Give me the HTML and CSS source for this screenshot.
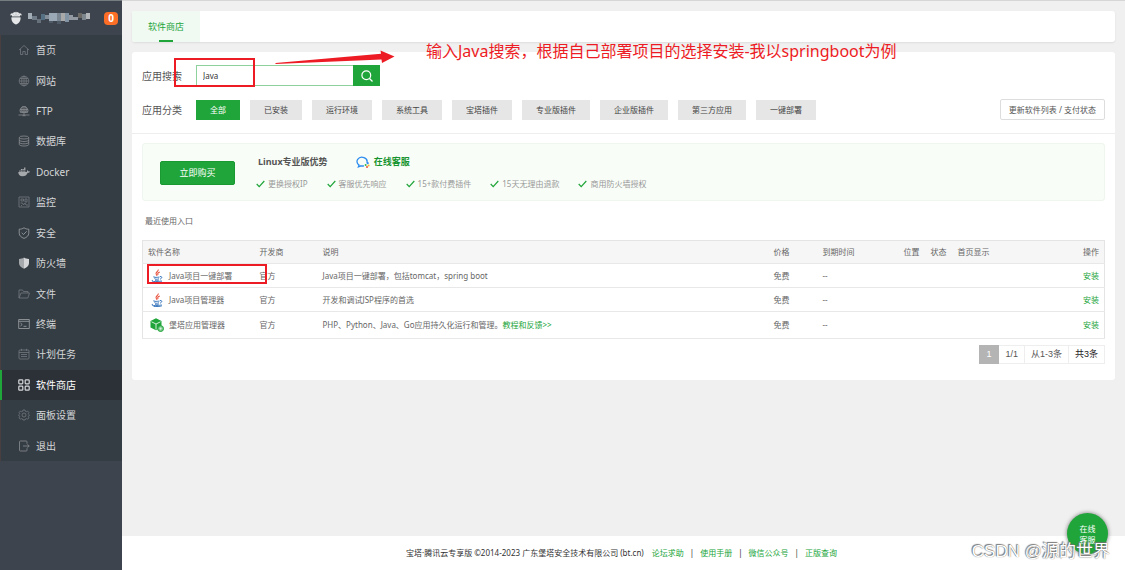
FILE: index.html
```html
<!DOCTYPE html>
<html lang="zh-CN">
<head>
<meta charset="utf-8">
<meta name="viewport" content="width=device-width, initial-scale=1">
<title>软件商店</title>
<link rel="stylesheet" href="styles.css">
</head>
<body>
<div class="app">
  <aside class="sidebar">
    <div class="brand">
      <svg class="brand-logo" viewBox="0 0 14 14" aria-hidden="true"><path fill="#e4e6e8" d="M1 4.400 2 2.600 4 2.200 5 1l1.300.6L7 .6l.7 1L9 1l1 1.200 2 .4 1 1.800-1.500-.4-.7 1.500H3.200L2.500 4zM2.500 6.300h9c.4 3-.9 6.200-4.500 7.200-3.600-1-4.900-4.200-4.500-7.200z"/><path stroke="#8e949a" stroke-width=".5" fill="none" d="M3 5.900h8M4.500 3.400l1 1M9.500 3.400l-1 1M7 2.500v2"/></svg>
      <svg class="brand-name" viewBox="0 0 62 14" aria-hidden="true">
        <path fill="#a3adb6" d="M0 2h4v6H0z"/><path fill="#6f7b86" d="M4 5h5v4H4z"/><path fill="#66717c" d="M9 8h4v4H9z"/><path fill="#557083" d="M13 3h4v6h-4z"/><path fill="#858f99" d="M17 4h4v4h-4z"/><path fill="#9aa9b5" d="M21 2h8v8h-8z"/><path fill="#7a8792" d="M29 2h4v8h-4z"/><path fill="#a9a9aa" d="M33 2h4v8h-4z"/><path fill="#8294a3" d="M37 2h4v9h-4z"/><path fill="#9299a1" d="M41 4h4v5h-4zM45 6h5v3h-5z"/><path fill="#6d6965" d="M50 2h4v5h-4z"/><path fill="#7d858d" d="M54 3h4v6h-4z"/><path fill="#b3b6b8" d="M58 2h4v6h-4z"/><path fill="#4e5b67" d="M29 10h4v3h-4zM21 10h4v2h-4z"/>
      </svg>
      <span class="badge">0</span>
    </div>
    <nav class="menu">
      <a class="menu-item" href="#"><svg class="icon" viewBox="0 0 12 12"><path d="M1 6 6 1.500 11 6M2.500 5v5.500h2.300V7.500h2.400v3h2.300V5"/></svg>首页</a>
      <a class="menu-item" href="#"><svg class="icon" viewBox="0 0 12 12"><circle cx="6" cy="6" r="4.800"/><ellipse cx="6" cy="6" rx="2.300" ry="4.800"/><path d="M1.200 6h9.600M6 1.200v9.600M2 3.500h8M2 8.500h8"/></svg>网站</a>
      <a class="menu-item" href="#"><svg class="icon mid" viewBox="0 0 12 12"><path d="M2.500 7.500a4 4 0 1 1 7 0zM2 4.500h8M2 6.200h8M6 1v7M4.500 1.500c-1 2-1 4 0 6M7.500 1.500c1 2 1 4 0 6M6 8v2M.5 10h11M4.500 10.700h3"/></svg>FTP</a>
      <a class="menu-item" href="#"><svg class="icon mid" viewBox="0 0 12 12"><ellipse cx="6" cy="2.500" rx="4.700" ry="1.500"/><path d="M1.300 2.500v7c0 2 9.400 2 9.400 0v-7M1.300 5c0 2 9.400 2 9.400 0M1.300 7.300c0 2 9.400 2 9.400 0"/></svg>数据库</a>
      <a class="menu-item" href="#"><svg class="icon" viewBox="0 0 12 12"><path class="solid" d="M.3 6h8.300c.7-.4.4-1.400.8-2 .6.400.8.900.8 1.400.7-.1 1.200 0 1.700.3-.4.900-1.300 1.100-2.200 1.100C8.800 9.200 7 10.300 4.600 10.300 1.500 10.300.3 8.500.3 6zM1.300 4.400h1.300v1.300H1.300zM2.900 4.400h1.300v1.300H2.900zM4.500 4.400h1.300v1.300H4.500zM6.100 4.400h1.300v1.300H6.100zM2.900 2.900h1.300v1.200H2.900zM4.500 2.900h1.300v1.200H4.500zM6.100 1.400h1.300v2.700H6.100z"/></svg>Docker</a>
      <a class="menu-item" href="#"><svg class="icon" viewBox="0 0 12 12"><path d="M1 1h10v10H1zM3 3h2.500v2H3zM7 3h2v3H7zM2.500 7h2l1 2 1.500-2 1 2H10M3 9.500h1"/></svg>监控</a>
      <a class="menu-item" href="#"><svg class="icon bright" viewBox="0 0 12 12"><path d="M6 .8c1.500 1 3 1.400 4.800 1.400v4c0 2.600-2.200 4.200-4.800 5.200C3.400 10.400 1.200 8.800 1.200 6.200v-4C3 2.200 4.500 1.800 6 .8zM3.700 5.800l1.800 1.700 3.200-3.200"/></svg>安全</a>
      <a class="menu-item" href="#"><svg class="icon" viewBox="0 0 12 12"><path class="pale" d="M6 .5c1.500 1 3 1.400 5 1.400v4.300c0 2.700-2.300 4.400-5 5.500z"/><path class="solid" d="M6 .5C4.500 1.500 3 1.900 1 1.900v4.300c0 2.700 2.300 4.400 5 5.500z"/></svg>防火墙</a>
      <a class="menu-item" href="#"><svg class="icon" viewBox="0 0 12 12"><path d="M1 10V2h3.500l1 1.500H10V5M1 10l2-5h8.500l-1.700 5z"/></svg>文件</a>
      <a class="menu-item" href="#"><svg class="icon bright" viewBox="0 0 12 12"><path d="M.7 1.500h10.600v9H.7zM.7 3.300h10.600M2.500 5l1.700 1.500L2.500 8M5.500 8.300h3"/></svg>终端</a>
      <a class="menu-item" href="#"><svg class="icon" viewBox="0 0 12 12"><rect x="1" y="2" width="10" height="9" rx="1"/><path d="M1 4.500h10M3.500.8v2M8.500.8v2M3 6.500h6M3 8.500h6"/></svg>计划任务</a>
      <a class="menu-item active" href="#" aria-current="page"><svg class="icon" viewBox="0 0 12 12"><rect x=".8" y=".8" width="4" height="4" rx=".8"/><rect x="7.200" y=".8" width="4" height="4" rx=".8"/><rect x=".8" y="7.200" width="4" height="4" rx=".8"/><rect x="7.200" y="7.200" width="4" height="4" rx=".8"/></svg>软件商店</a>
      <a class="menu-item" href="#"><svg class="icon" viewBox="0 0 12 12"><path d="M5 1h2l.4 1.300 1 .4 1.200-.6 1.300 1.300-.6 1.200.3.700.9.700-.9 1-.3.700.6 1.200-1.300 1.300-1.200-.6-1 .4L7 11H5l-.4-1-1-.4-1.200.6L1.100 8.900l.6-1.200-.3-.7L.5 6l.9-.7.3-.7-.6-1.200L2.400 2.100l1.200.6 1-.4z"/><circle cx="6" cy="6" r="2"/></svg>面板设置</a>
      <a class="menu-item" href="#"><svg class="icon mid" viewBox="0 0 12 12"><path d="M9 3.800V1.800Q9 1 8.200 1H2.300q-.8 0-.8.800v8.400q0 .8.800.8h5.900q.8 0 .8-.8v-2M5 6h6.200M9.500 4.300 11.200 6 9.500 7.700"/></svg>退出</a>
    </nav>
  </aside>

  <div class="page">
    <main class="content">
      <div class="tabs"><a class="tab" href="#">软件商店</a></div>

      <section class="panel">
        <div class="filters">
          <form class="search-row">
            <label class="row-label" for="q">应用搜索</label>
            <input class="search-input" id="q" type="text" value="Java">
            <button class="search-button" type="button" aria-label="搜索"><svg viewBox="0 0 12 12"><circle cx="5.300" cy="5.300" r="4.400"/><path d="m8.500 8.500 3 3"/></svg></button>
          </form>
          <div class="category-row">
            <span class="row-label">应用分类</span>
            <div class="categories">
              <button class="category selected" type="button">全部</button>
              <button class="category" type="button">已安装</button>
              <button class="category" type="button">运行环境</button>
              <button class="category" type="button">系统工具</button>
              <button class="category" type="button">宝塔插件</button>
              <button class="category" type="button">专业版插件</button>
              <button class="category" type="button">企业版插件</button>
              <button class="category" type="button">第三方应用</button>
              <button class="category" type="button">一键部署</button>
            </div>
            <button class="refresh" type="button">更新软件列表 / 支付状态</button>
          </div>
        </div>

        <div class="promo">
          <button class="buy" type="button">立即购买</button>
          <div class="promo-text">
            <div class="promo-head">
              <strong>Linux专业版优势</strong>
              <a class="service" href="#"><svg viewBox="0 0 14 12"><path fill="none" stroke="#2f8df0" stroke-width="1.300" d="M10.800 6.800A5 4.300 0 1 0 3 9l-.6 1.800L5 9.800c1 .3 2 .2 3 0"/><circle cx="11.700" cy="7.200" r="1.100" fill="#2f8df0"/><circle cx="9.600" cy="9" r="1" fill="#35b24a"/><circle cx="12.600" cy="9.500" r="1" fill="#f8b62b"/><circle cx="11" cy="10.900" r="1" fill="#f0503c"/></svg>在线客服</a>
            </div>
            <ul class="benefits">
              <li><svg viewBox="0 0 9 8"><path d="m.7 4 2.500 2.600L8.300 1"/></svg>更换授权IP</li>
              <li><svg viewBox="0 0 9 8"><path d="m.7 4 2.500 2.600L8.300 1"/></svg>客服优先响应</li>
              <li><svg viewBox="0 0 9 8"><path d="m.7 4 2.500 2.600L8.300 1"/></svg>15+款付费插件</li>
              <li><svg viewBox="0 0 9 8"><path d="m.7 4 2.500 2.600L8.300 1"/></svg>15天无理由退款</li>
              <li><svg viewBox="0 0 9 8"><path d="m.7 4 2.500 2.600L8.300 1"/></svg>商用防火墙授权</li>
            </ul>
          </div>
        </div>

        <div class="recent">最近使用入口</div>

        <table class="software">
          <colgroup><col class="c-name"><col class="c-vendor"><col><col class="c-price"><col class="c-expire"><col class="c-small"><col class="c-small"><col class="c-home"><col class="c-action"></colgroup>
          <thead><tr><th>软件名称</th><th>开发商</th><th>说明</th><th>价格</th><th>到期时间</th><th>位置</th><th>状态</th><th>首页显示</th><th class="action">操作</th></tr></thead>
          <tbody>
            <tr><td><span class="name"><svg viewBox="0 0 14 14"><path class="steam" d="M8.200.5C9 2.300 4.800 3.400 6.200 5.200L7.100 6.800M9.800 3C7.500 4 7.200 4.700 8.200 6"/><path class="cup" d="M4.200 7.600c-1.800.5.500 1 3.500.7l1.800-.3M4.500 9.500c0 1 3 1 4.500.3M5 11.200c.5.700 2.500.7 3.700.1M2.800 11.300c-4 1.300 6 2 8.700.4M10 7.600c2.500-.6 2.300 1.800 0 2.600M3.500 13.300c3 .5 6.500.3 8.500-.6"/></svg>Java项目一键部署</span></td><td>官方</td><td>Java项目一键部署，包括tomcat，spring boot</td><td>免费</td><td>--</td><td></td><td></td><td></td><td class="action"><a href="#">安装</a></td></tr>
            <tr><td><span class="name"><svg viewBox="0 0 14 14"><path class="steam" d="M8.200.5C9 2.300 4.800 3.400 6.200 5.200L7.100 6.800M9.800 3C7.500 4 7.200 4.700 8.200 6"/><path class="cup" d="M4.200 7.600c-1.800.5.500 1 3.500.7l1.800-.3M4.500 9.500c0 1 3 1 4.500.3M5 11.200c.5.700 2.500.7 3.700.1M2.800 11.300c-4 1.300 6 2 8.700.4M10 7.600c2.500-.6 2.300 1.800 0 2.600M3.500 13.300c3 .5 6.500.3 8.500-.6"/></svg>Java项目管理器</span></td><td>官方</td><td>开发和调试JSP程序的首选</td><td>免费</td><td>--</td><td></td><td></td><td></td><td class="action"><a href="#">安装</a></td></tr>
            <tr class="tall"><td><span class="name"><svg viewBox="0 0 14 14"><path fill="#20a53a" d="M6 .3 11.500 3v6.500L6 12.200.5 9.500V3z"/><path fill="none" stroke="#fff" stroke-width=".8" d="M1.500 3.800 6 6l4.500-2.200M6 6v5.500"/><circle cx="10.600" cy="10.600" r="2.900" fill="#79c98a" stroke="#20a53a"/><circle cx="10.600" cy="10.600" r="1.100" fill="#d9f1de"/></svg>堡塔应用管理器</span></td><td>官方</td><td>PHP、Python、Java、Go应用持久化运行和管理。<a href="#">教程和反馈&gt;&gt;</a></td><td>免费</td><td>--</td><td></td><td></td><td></td><td class="action"><a href="#">安装</a></td></tr>
          </tbody>
        </table>

        <div class="pager"><span class="current">1</span><span>1/1</span><span>从1-3条</span><span class="total">共3条</span></div>
      </section>
    </main>

    <footer class="footer">
      <span>宝塔·腾讯云专享版 ©2014-2023 广东堡塔安全技术有限公司 (bt.cn)</span>
      <a href="#">论坛求助</a><i>|</i><a href="#">使用手册</a><i>|</i><a href="#">微信公众号</a><i>|</i><a href="#">正版查询</a>
    </footer>
  </div>

  <div class="mark mark-search"></div>
  <div class="mark mark-row"></div>
  <svg class="arrow" viewBox="0 0 122 16" aria-hidden="true"><path fill="#ed1c24" d="M.5 13 106 3.800 105.500.5 119.500 6.500 107 13l-.5-3.500L.5 14z"/></svg>
  <p class="note">输入Java搜索，根据自己部署项目的选择安装-我以springboot为例</p>
  <button class="chat" type="button">在线<br>客服</button>
  <div class="watermark">CSDN @源的世界</div>
</div>
</body>
</html>
```

FILE: styles.css
```css
* { box-sizing: border-box; }

body {
  margin: 0;
  background: #f0f0f0;
  color: #666;
  font: 8px/12px "Noto Sans", "Noto Sans CJK SC", sans-serif;
}

a { color: #20a53a; text-decoration: none; }
button, input { font: inherit; margin: 0; }
svg { display: block; flex: none; }

.app {
  position: relative;
  display: flex;
  min-height: 100vh;
}

/* Sidebar */
.sidebar {
  flex: 0 0 122px;
  background: #3d444d;
  border-top: 1px solid #777c81;
}
.brand {
  display: flex;
  align-items: center;
  height: 34px;
  padding: 0 4px 0 9px;
}
.brand-logo { width: 14px; height: 14px; }
.brand-name { width: 62px; height: 14px; margin-left: 5px; }
.badge {
  margin-left: auto;
  width: 14px;
  border-radius: 4px;
  background: #fc6d26;
  color: #fff;
  font-size: 10px;
  line-height: 13px;
  font-weight: bold;
  text-align: center;
}
.menu {
  display: flex;
  flex-direction: column;
  min-height: 426px;
  background: #353d44;
}
.menu-item {
  flex: 1;
  display: flex;
  align-items: center;
  gap: 6px;
  padding-left: 17px;
  border-left: 1px solid #493f40;
  color: #d4d6d8;
  font-size: 10px;
}
.menu-item.active {
  background: #2c3138;
  border-left: 2px solid #20a53a;
  padding-left: 16px;
  color: #fff;
}
.icon {
  width: 12px;
  height: 12px;
  fill: none;
  stroke: #73797e;
  stroke-width: 0.8;
}
.icon.mid { stroke: #8a8e92; }
.icon.bright { stroke: #a0a4a7; }
.icon .solid { fill: #a6a9ac; stroke: none; }
.icon .pale { fill: #d3d5d6; stroke: none; }
.active .icon { stroke: #d6d8da; stroke-width: 1.2; }

/* Page */
.page {
  flex: 1;
  display: flex;
  flex-direction: column;
  min-width: 0;
  border-top: 1px solid #d6d6d6;
}
.content { flex: 1; padding: 10px; }
.tabs {
  display: flex;
  height: 31px;
  margin-bottom: 10px;
  border-radius: 3px;
  background: #fff;
  box-shadow: 0 1px 2px #ddd;
  overflow: hidden;
}
.tab {
  display: flex;
  align-items: center;
  padding: 0 16px;
  background: linear-gradient(#20a53a, #20a53a) center bottom / 14px 2px no-repeat #f0f9f2;
  font-size: 9px;
}
.panel {
  padding: 0 10px 16px;
  border-radius: 3px;
  background: #fff;
}
.filters {
  margin: 0 -10px 9px;
  padding: 13px 10px;
  border-bottom: 1px solid #eee;
}
.search-row, .category-row { display: flex; align-items: center; }
.category-row { margin-top: 13px; }
.row-label {
  flex: 0 0 54px;
  color: #555;
  font-size: 10px;
}
.search-input {
  width: 157px;
  height: 21px;
  padding: 0 6px;
  border: 1px solid #8fd19d;
  border-right: 0;
  color: #333;
  outline: 0;
}
.search-button {
  display: grid;
  place-items: center;
  width: 27px;
  height: 21px;
  padding: 0;
  border: 0;
  background: #20a53a;
}
.search-button svg { width: 12px; height: 12px; fill: none; stroke: #fff; stroke-width: 1.2; }
.categories { display: flex; gap: 10px; }
.category {
  height: 20px;
  padding: 0 14px;
  border: 0;
  background: #e6e6e6;
  color: #444;
}
.category.selected { background: #20a53a; color: #fff; }
.refresh {
  height: 21px;
  margin-left: auto;
  padding: 0 8px;
  border: 1px solid #ddd;
  border-radius: 2px;
  background: #fff;
  color: #555;
}

/* Promotion */
.promo {
  display: flex;
  align-items: center;
  gap: 21px;
  height: 58px;
  padding: 2px 0 0 17px;
  border: 1px solid #eef6ef;
  border-radius: 3px;
  background: #f8fdf7;
}
.buy {
  width: 75px;
  height: 24px;
  border: 1px solid #1a9933;
  border-radius: 2px;
  background: #20a53a;
  color: #fff;
  font-size: 9px;
}
.promo-head {
  display: flex;
  align-items: center;
  gap: 28px;
  margin-bottom: 10px;
  padding-left: 2px;
  color: #555;
  font-size: 9px;
}
.service { display: flex; align-items: center; gap: 4px; font-weight: bold; color: #16942f; }
.service svg { width: 14px; height: 12px; }
.benefits {
  display: flex;
  gap: 19px;
  margin: 0;
  padding: 0;
  list-style: none;
  color: #999;
}
.benefits li { display: flex; align-items: center; gap: 3px; }
.benefits svg { width: 9px; height: 8px; fill: none; stroke: #20a53a; stroke-width: 1.2; }

.recent { padding: 14px 3px 13px; }

/* Software table */
.software {
  width: 100%;
  table-layout: fixed;
  border: 1px solid #e4e4e4;
  border-collapse: collapse;
}
.c-name { width: 112px; }
.c-vendor { width: 63px; }
.c-price { width: 49px; }
.c-expire { width: 81px; }
.c-small { width: 27px; }
.c-home { width: 62px; }
.c-action { width: 90px; }
.software th, .software td {
  height: 24px;
  padding: 0 5px;
  border-bottom: 1px solid #e8e8e8;
  font-weight: normal;
  text-align: left;
  white-space: nowrap;
}
.software th { height: 23px; background: #f6f6f6; }
.software .tall td { height: 27px; }
.software .action { text-align: right; }
.name { display: flex; align-items: center; gap: 5px; padding-left: 2px; }
.name svg { width: 14px; height: 14px; }
.steam { fill: none; stroke: #e8533f; stroke-width: 1.1; }
.cup { fill: none; stroke: #3a78bd; stroke-width: 1; }

.pager { display: flex; justify-content: flex-end; margin-top: 6px; }
.pager span {
  height: 19px;
  padding: 0 6px;
  border: 1px solid #eee;
  border-left: 0;
  color: #555;
  line-height: 17px;
  font-family: "Liberation Sans", "Noto Sans CJK SC", sans-serif;
  font-size: 9px;
}
.pager .current { padding: 0 7px; border-color: #b4b4b4; background: #b4b4b4; color: #fff; }
.pager .total { color: #222; }

/* Footer */
.footer {
  display: flex;
  align-items: center;
  justify-content: center;
  gap: 6px;
  height: 34px;
  padding-right: 4px;
  background: #fff;
  color: #333;
}
.footer span { margin-right: 2px; }
.footer i { font-style: normal; }

/* Annotations and floating items */
.mark { position: absolute; border: 2px solid #ed1c24; }
.mark-search { left: 174px; top: 58px; width: 81px; height: 29px; }
.mark-row { left: 147px; top: 264px; width: 120px; height: 20px; }
.arrow { position: absolute; left: 275px; top: 50px; width: 122px; height: 16px; }
.note {
  position: absolute;
  left: 426px;
  top: 40px;
  margin: 0;
  color: #ed1c24;
  font-size: 16px;
  line-height: 22px;
  white-space: nowrap;
}
.chat {
  position: absolute;
  right: 17px;
  bottom: 16px;
  width: 41px;
  height: 41px;
  padding: 0;
  border: 0;
  border-radius: 50%;
  background: #20a53a;
  box-shadow: 0 0 4px #777;
  color: #fff;
  line-height: 11px;
}
.watermark {
  position: absolute;
  right: 15px;
  bottom: 7px;
  color: #fff;
  font-family: "Liberation Sans", "Noto Sans CJK SC", sans-serif;
  font-size: 17px;
  line-height: 22px;
  text-shadow: 0 0 1px #555, -1px -1px 1px #777;
}
```
